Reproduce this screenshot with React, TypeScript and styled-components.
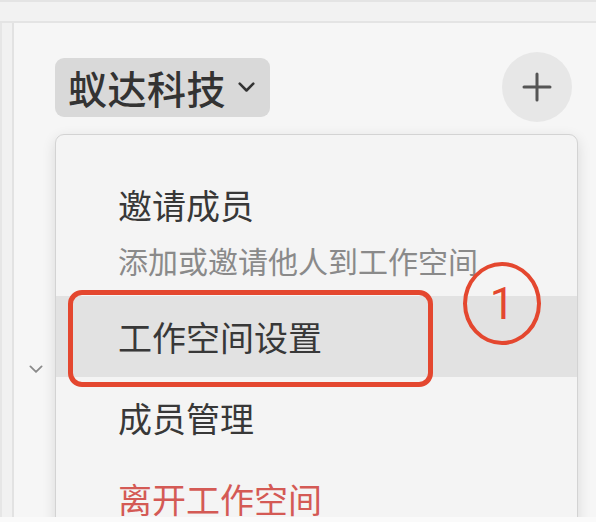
import React from "react";
import styled, { createGlobalStyle } from "styled-components";

const Global = createGlobalStyle`
  html, body { margin: 0; padding: 0; background: #fafafa; }
  body { font-family: "Noto Sans CJK SC", "Noto Sans", sans-serif; }
`;

const Frame = styled.div`
  height: 515px;
  border-top: 2px solid #e4e4e4;
  background: #f1f1f1;
  display: flex;
  flex-direction: column;
  overflow: hidden;
`;

const TopBar = styled.div`
  height: 19px;
  flex: none;
  background: #f2f2f2;
  border-bottom: 2px solid #e4e4e4;
`;

const Body = styled.div`
  flex: 1;
  display: flex;
  min-height: 0;
`;

const Rail = styled.div`
  width: 10px;
  flex: none;
  background: #f1f1f1;
  border-left: 2px solid #e6e6e6;
  border-right: 2px solid #e2e2e2;
`;

const Main = styled.div`
  flex: 1;
  background: #f6f6f6;
  padding: 29px 18px 0 41px;
  position: relative;
`;

const Header = styled.div`
  display: flex;
  align-items: center;
  justify-content: space-between;
  height: 70px;
  padding-right: 6px;
`;

const WorkspaceButton = styled.div`
  display: flex;
  align-items: center;
  gap: 12px;
  height: 59px;
  padding: 0 15px 0 13px;
  background: #d9d9d9;
  border-radius: 9px;
  color: #333;
  font-size: 39px;
  font-weight: 500;
  letter-spacing: 0.5px;
`;

const AddButton = styled.div`
  width: 70px;
  height: 70px;
  border-radius: 50%;
  background: #e7e7e7;
  display: flex;
  align-items: center;
  justify-content: center;
`;

const Card = styled.div`
  margin-top: 12px;
  background: #f4f4f4;
  border: 1px solid #d3d3d3;
  border-radius: 9px;
  box-shadow: 0 4px 14px rgba(0, 0, 0, 0.12);
  display: flex;
  flex-direction: column;
`;

const InviteItem = styled.div`
  padding: 47px 0 16px 62px;
  display: flex;
  flex-direction: column;
  gap: 12px;
`;

const ItemTitle = styled.div`
  font-size: 34px;
  line-height: 46px;
  color: #383838;
`;

const ItemSub = styled.div`
  font-size: 30px;
  line-height: 40px;
  color: #8a8a8a;
`;

const MenuRow = styled.div<{ $active?: boolean; $danger?: boolean }>`
  height: 81px;
  display: flex;
  align-items: center;
  padding-left: 62px;
  font-size: 34px;
  color: ${(p) => (p.$danger ? "#d45a55" : "#383838")};
  background: ${(p) => (p.$active ? "#e2e2e2" : "transparent")};
`;

const SideChevron = styled.div`
  position: absolute;
  left: 15px;
  top: 342px;
  width: 14px;
  height: 10px;
  display: flex;
`;

const Highlight = styled.div`
  position: absolute;
  left: 54px;
  top: 267px;
  width: 355px;
  height: 87px;
  border: 5px solid #e4472f;
  border-radius: 14px;
`;

const Badge = styled.div`
  position: absolute;
  left: 449px;
  top: 239px;
  width: 70px;
  height: 75px;
  border: 4px solid #e4472f;
  border-radius: 50%;
  display: flex;
  align-items: center;
  justify-content: center;
  color: #e4472f;
  font-family: Roboto, "Noto Sans", sans-serif;
  font-weight: 400;
  font-size: 44px;
  line-height: 1;
`;

const Chevron = ({ size, color, width }: { size: number; color: string; width: number }) => (
  <svg width={size} height={size * 0.6} viewBox="0 0 20 12" fill="none">
    <path d="M2 2 L10 10 L18 2" stroke={color} strokeWidth={width} strokeLinecap="round" strokeLinejoin="round" />
  </svg>
);

export default function App() {
  return (
    <>
      <Global />
      <Frame>
        <TopBar />
        <Body>
          <Rail />
          <Main>
            <Header>
              <WorkspaceButton>
                <span>蚁达科技</span>
                <Chevron size={17} color="#333" width={3} />
              </WorkspaceButton>
              <AddButton>
                <svg width="30" height="30" viewBox="0 0 30 30">
                  <path d="M15 2 V28 M2 15 H28" stroke="#555" strokeWidth="3" strokeLinecap="round" />
                </svg>
              </AddButton>
            </Header>
            <Card>
              <InviteItem>
                <ItemTitle>邀请成员</ItemTitle>
                <ItemSub>添加或邀请他人到工作空间</ItemSub>
              </InviteItem>
              <MenuRow $active>工作空间设置</MenuRow>
              <MenuRow>成员管理</MenuRow>
              <MenuRow $danger>离开工作空间</MenuRow>
            </Card>
            <SideChevron>
              <Chevron size={14} color="#8a8a8a" width={2.5} />
            </SideChevron>
            <Highlight />
            <Badge>1</Badge>
          </Main>
        </Body>
      </Frame>
    </>
  );
}
